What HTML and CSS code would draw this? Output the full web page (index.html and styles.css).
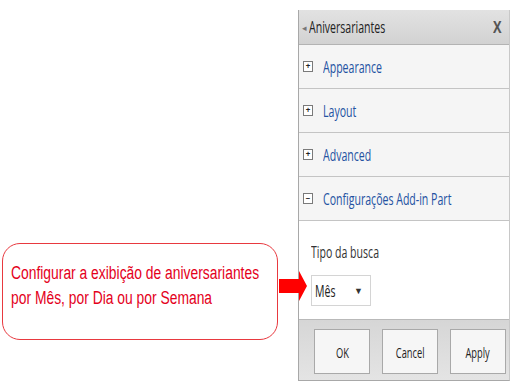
FILE: index.html
```html
<!DOCTYPE html>
<html lang="pt-BR">
<head>
  <meta charset="UTF-8">
  <title>Aniversariantes</title>
  <link rel="stylesheet" href="styles.css">
</head>
<body>
  <div class="stage">
    <div class="callout">
      <p><span class="narrow">Configurar a exibição de aniversariantes</span><br><span class="narrow">por Mês, por Dia ou por Semana</span></p>
      <div class="arrow">
        <span class="arrow-body"></span>
        <span class="arrow-head"></span>
      </div>
    </div>

    <div class="panel">
      <div class="panel-head">
        <span class="back">&#9666;</span>
        <span class="title"><span class="narrow">Aniversariantes</span></span>
        <span class="close">X</span>
      </div>

      <div class="row"><span class="toggle">+</span><span class="row-text narrow">Appearance</span></div>
      <div class="row"><span class="toggle">+</span><span class="row-text narrow">Layout</span></div>
      <div class="row"><span class="toggle">+</span><span class="row-text narrow">Advanced</span></div>
      <div class="row"><span class="toggle">&minus;</span><span class="row-text narrow">Configurações Add-in Part</span></div>

      <div class="content">
        <label class="field-label" for="tipo"><span class="narrow">Tipo da busca</span></label>
        <div class="select" id="tipo">
          <span class="narrow">Mês</span>
          <span class="caret">&#9660;</span>
        </div>
      </div>

      <div class="footer">
        <button class="btn"><span class="narrow-c">OK</span></button>
        <button class="btn"><span class="narrow-c">Cancel</span></button>
        <button class="btn"><span class="narrow-c">Apply</span></button>
      </div>
    </div>
  </div>
</body>
</html>
```

FILE: styles.css
```css
body {
  margin: 0;
  overflow: hidden;
  background-color: white;
  font-family: 'Liberation Sans', Arial, sans-serif;
}

/* o texto da captura é estreito, comprimimos na horizontal */
.narrow {
  display: inline-block;
  white-space: nowrap;
  transform: scaleX(0.66);
  transform-origin: left center;
}

.narrow-c {
  display: inline-block;
  white-space: nowrap;
  transform: scaleX(0.62);
}

.stage {
  display: flex;
  padding: 10px 0 0 2px;
  width: 510px;
  height: 374px;
}

/* balão vermelho à esquerda */
.callout {
  position: relative;
  width: 274px;
  height: 95px;
  margin-top: 233px;
  border: 1px solid #e8393f;
  border-radius: 18px;
  color: #e4001b;
  font-size: 18px;
  line-height: 25px;
}

.callout p {
  margin: 17px 0 0 8px;
}

.callout .narrow {
  transform: scaleX(0.77);
}

.arrow {
  position: absolute;
  left: 276px;
  top: 27px;
  display: flex;
  align-items: center;
}

.arrow-body {
  width: 20px;
  height: 14px;
  background-color: #f00;
}

.arrow-head {
  width: 0;
  height: 0;
  border-top: 15px solid transparent;
  border-bottom: 15px solid transparent;
  border-left: 8px solid #f00;
}

/* painel de configuração */
.panel {
  width: 210px;
  margin-left: 20px;
  border-left: 1px solid #a8a8a8;
  border-right: 1px solid #c8c8c8;
  border-bottom: 1px solid #a8a8a8;
  display: flex;
  flex-direction: column;
  height: 370px;
  font-family: 'Open Sans', sans-serif;
}

.panel-head {
  display: flex;
  align-items: center;
  height: 34px;
  background: linear-gradient(#e2e2e2, #d2d2d2);
  border-bottom: 1px solid #b3b3b3;
  color: #222;
  font-size: 16px;
}

.back {
  font-size: 9px;
  color: #777;
  margin: 0 2px 0 3px;
}

.title {
  flex: 1;
}

.close {
  font-size: 16px;
  font-weight: bold;
  color: #555;
  margin-right: 6px;
  transform: scaleX(0.8);
}

.row {
  display: flex;
  align-items: center;
  height: 43px;
  background-color: #f5f5f5;
  border-bottom: 1px solid #c4c4c4;
  font-size: 16px;
}

.toggle {
  flex: none;
  width: 8px;
  height: 9px;
  margin: 0 10px 0 4px;
  border: 1px solid #7a7a7a;
  background-color: white;
  font-size: 8px;
  line-height: 8px;
  text-align: center;
  color: #222;
  font-weight: bold;
}

.row-text {
  color: #2452a2;
}

.content {
  height: 98px;
  padding-left: 12px;
  background-color: white;
  border-bottom: 1px solid #b9b9b9;
}

.field-label {
  display: block;
  margin-top: 20px;
  font-size: 16px;
  color: #333;
}

.select {
  display: flex;
  align-items: center;
  justify-content: space-between;
  width: 48px;
  height: 29px;
  margin-top: 12px;
  padding: 0 7px 0 3px;
  border: 1px solid #d4d4d4;
  font-size: 16px;
  color: #222;
}

.caret {
  font-size: 9px;
  color: #333;
}

.footer {
  flex: 1;
  display: flex;
  gap: 12px;
  padding: 9px 0 0 15px;
  background: linear-gradient(#d6d6d6, #e4e4e4);
}

.btn {
  width: 56px;
  height: 45px;
  padding: 0;
  border: 1px solid #a9a9a9;
  background-color: #f6f6f6;
  font-family: inherit;
  font-size: 15px;
  color: #222;
}
```
